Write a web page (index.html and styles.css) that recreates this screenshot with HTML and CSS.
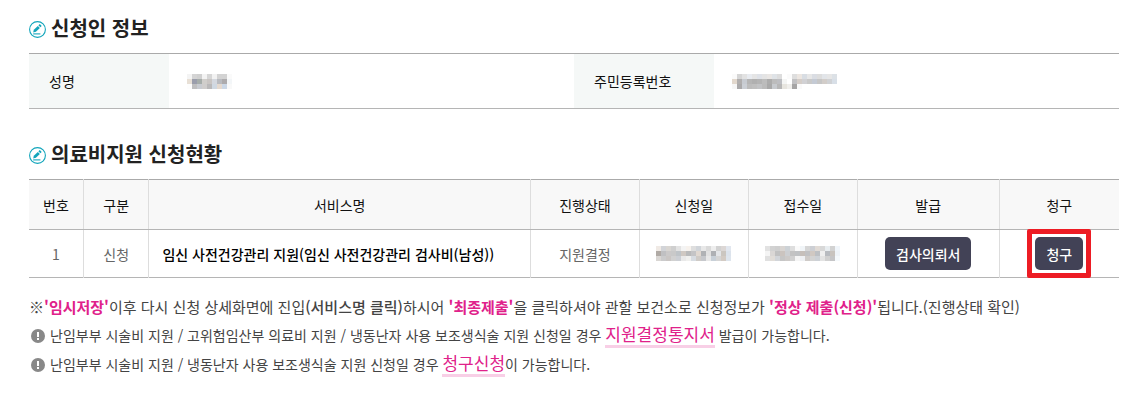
FILE: index.html
```html
<!DOCTYPE html>
<html lang="ko">
<head>
    <meta charset="UTF-8">
    <meta name="viewport" content="width=device-width, initial-scale=1.0">
    <title>의료비지원 신청현황</title>
    <link rel="stylesheet" href="styles.css">
</head>
<body>
    <svg class="defs" width="0" height="0" aria-hidden="true">
        <symbol id="icoEdit" viewBox="0 0 17 17">
            <circle cx="8.5" cy="8.5" r="7.9" fill="none" stroke="#12a5bb" stroke-width="1.1"/>
            <path d="M4.2 11.4 4.8 8.7 8.8 4.9 10.9 7 6.9 10.8z" fill="#12a5bb"/>
            <path d="M9.4 4.3 10.8 3.1 12.7 4.9 11.4 6.3z" fill="#12a5bb"/>
            <path d="M4.2 12.9H11.4" stroke="#12a5bb" stroke-width="1.1"/>
        </symbol>
        <symbol id="icoNotice" viewBox="0 0 14 14">
            <circle cx="7" cy="7" r="7" fill="#888"/>
            <path d="M6 3h2v5H6zM6 9h2v2H6z" fill="#fff"/>
        </symbol>
    </svg>

    <div class="container">
        <h2><svg class="icoEdit"><use href="#icoEdit"/></svg>신청인 정보</h2>
        <table class="infoTable">
            <tr>
                <th scope="row">성명</th>
                <td><svg class="mosaic" width="45" height="15" data-rows="f4f4f4 d4d4d4 d0d0d0 f3f3f3 d6d6d6 f2f2f2 d3d3d3 d3d3d3 fafafa/e8e0d6 9b9eac a6adaa d0cecb c9c5c3 d4d8df b9bbc0 adabad f3f6f8/fdfdfd bfbfc0 c8cbd1 cfcdcc bab9ba cfd8e2 e4d9cf cbd7e6 f9f9f9"></svg></td>
                <th scope="row">주민등록번호</th>
                <td><svg class="mosaic" width="105" height="15" data-rows="fafafa d5d5d5 e2e2e2 e8ebf0 e5e5e5 dfe2e8 e4e4e4 e9e6e4 dfe3e7 dddddd ffffff fbfbfb dedede ece6e1 d8dde3 e7e7e7 dadde3 dddddd e2e5e9 e6e6e6 dce1e6/e2d8cd b0aeae c7cbd1 b5b5b5 b0b0b0 b4b4b4 bcbcbc acacac bcbcbc bdbec2 f4f5f4 ffffff c1c1c3 d4cdc8 d1d1d4 c9c9c9 c4cad4 c6c6c6 d2cdc9 d0d2d5 d8dfe7/f6f6f6 aaa9aa cbcfd5 bcbcbc bfbfbf c2c3c5 bbbbbb a9a9a9 c7cace b7b7b7 e7e5df f0efec a6a5a5 fafafa ffffff ffffff ffffff ffffff ffffff ffffff ffffff"></svg></td>
            </tr>
        </table>

        <h2><svg class="icoEdit"><use href="#icoEdit"/></svg>의료비지원 신청현황</h2>
        <table class="listTable">
            <colgroup>
                <col class="colNo"><col class="colType"><col class="colName">
                <col class="colDate"><col class="colDate"><col class="colDate">
                <col class="colIssue"><col class="colClaim">
            </colgroup>
            <thead>
                <tr>
                    <th>번호</th>
                    <th>구분</th>
                    <th>서비스명</th>
                    <th>진행상태</th>
                    <th>신청일</th>
                    <th>접수일</th>
                    <th>발급</th>
                    <th>청구</th>
                </tr>
            </thead>
            <tbody>
                <tr>
                    <td>1</td>
                    <td>신청</td>
                    <td class="name"><a href="#">임신 사전건강관리 지원(임신 사전건강관리 검사비(남성))</a></td>
                    <td>지원결정</td>
                    <td><svg class="mosaic" width="75" height="15" data-rows="f0eae5 d2d4d8 d9d6d2 cfcfcf e3e3e3 f4f4f4 f7f2ed dedede d1d5da e8e8e8 dadada eeeeee d2d2d2 dcd7d5 e2e7ef/b0aaa5 c0c0c2 cbc9c9 c9c9c9 bfc4c8 cfc8c2 b9babb c4c4c6 e0d8d1 b0b2b5 e1e1e1 aeb0b4 e3e5e8 cbc6c0 dce3ec/d9d6d3 cbcbcc cac6c4 d1d1d1 cccfd4 e9e9e9 f0f0ee d7dce2 cfcbc7 c6c8cc e8e8e8 c8d0d8 d5d5d5 d3cbc4 dee5ed"></svg></td>
                    <td><svg class="mosaic" width="75" height="15" data-rows="e2e2e2 d2d2d2 cfcfcf d9d5d2 cdd2d6 dedede fafafa f1f5f8 d6d6d6 cdcfd4 e1dbd6 d8d8d8 e8edf0 d2d2d2 f0f5fa/f4f4f4 dad7d5 c1c1c1 cbc4bf cdcfd2 c3c3c3 c0c2c4 c6bfba c1c1c3 d0c8c2 bdc0c4 efefef b8bbc0 c8c3be eef3f8/e0e0e0 e1ddd8 d2d5d9 c6c6c6 cdcac8 d1d1d1 f5f5f5 eef0f3 cfcbc8 d3d3d3 cdd1d6 e3e3e3 d0d0d0 c5c5c7 f5f9fc"></svg></td>
                    <td><button type="button" class="btn">검사의뢰서</button></td>
                    <td><button type="button" class="btn marked">청구</button></td>
                </tr>
            </tbody>
        </table>

        <p class="guide">※<strong class="point">'임시저장'</strong>이후 다시 신청 상세화면에 진입<strong>(서비스명 클릭)</strong>하시어 <strong class="point">'최종제출'</strong>을 클릭하셔야 관할 보건소로 신청정보가 <strong class="point">'정상 제출(신청)'</strong>됩니다.(진행상태 확인)</p>
        <ul class="notice">
            <li><svg class="icoNotice"><use href="#icoNotice"/></svg><p>난임부부 시술비 지원 / 고위험임산부 의료비 지원 / 냉동난자 사용 보조생식술 지원 신청일 경우 <em>지원결정통지서</em> 발급이 가능합니다.</p></li>
            <li><svg class="icoNotice"><use href="#icoNotice"/></svg><p>난임부부 시술비 지원 / 냉동난자 사용 보조생식술 지원 신청일 경우 <em>청구신청</em>이 가능합니다.</p></li>
        </ul>
    </div>
    <script src="script.js"></script>
</body>
</html>
```
FILE: styles.css
```css
*{
    margin: 0;
    padding: 0;
    box-sizing: border-box;
    font-family: "Noto Sans CJK KR", sans-serif;
}
body{
    background-color: #fff;
    color: #444;
    font-size: 14px;
}
.defs{
    position: absolute;
}
.container{
    padding: 15px 18px 20px 29px;
}
h2{
    display: flex;
    align-items: center;
    gap: 5px;
    height: 26px;
    margin-bottom: 12px;
    font-size: 20px;
    font-weight: 700;
    line-height: 26px;
    color: #222;
}
.icoEdit{
    width: 17px;
    height: 17px;
    margin-top: 2px;
}
table{
    width: 100%;
    table-layout: fixed;
    border-collapse: collapse;
    border-top: 1px solid #aaa;
    border-bottom: 1px solid #b5b5b5;
}
th{
    font-weight: 400;
    color: #111;
}
.mosaic{
    display: block;
}

/* applicant */
.infoTable{
    margin-bottom: 32px;
}
.infoTable th{
    width: 140px;
    height: 55px;
    padding-left: 20px;
    text-align: left;
    background-color: #f5f8f7;
}
.infoTable td{
    padding-left: 18px;
}

/* list */
.colNo{ width: 5%; }
.colType{ width: 6%; }
.colName{ width: 35%; }
.colDate{ width: 10%; }
.colIssue{ width: 13%; }
.colClaim{ width: 11%; }
.listTable th, .listTable td{
    text-align: center;
    border-left: 1px solid #ddd;
}
.listTable th:first-child, .listTable td:first-child{
    border-left: none;
}
.listTable th{
    height: 50px;
    background-color: #f8f8f8;
    border-bottom: 1px solid #b5b5b5;
}
.listTable td{
    height: 48px;
    color: #666;
}
.listTable .name{
    padding-left: 13px;
    text-align: left;
}
.name a{
    color: #000;
    font-weight: 500;
    text-decoration: none;
}
.listTable .mosaic{
    margin: 0 auto;
}
.btn{
    position: relative;
    height: 33px;
    padding: 0 11px;
    border: none;
    border-radius: 5px;
    background-color: #424256;
    color: #fff;
    font-size: 14px;
    font-weight: 500;
    vertical-align: middle;
}
.marked::after{
    content: "";
    position: absolute;
    inset: -8px;
    border: 5px solid #ed1c24;
    border-radius: 2px;
}

/* guide */
.guide{
    margin-top: 14px;
    font-size: 15px;
    line-height: 29px;
}
.guide strong{
    font-weight: 500;
}
.guide .point{
    color: #e0218a;
    font-weight: 700;
}
.notice{
    list-style: none;
}
.notice li{
    display: flex;
    align-items: center;
    gap: 5px;
    height: 29px;
    padding-left: 2px;
}
.icoNotice{
    width: 14px;
    height: 14px;
}
.notice em{
    display: inline-block;
    border-bottom: 3px solid #f8cfe6;
    color: #e0218a;
    font-size: 17px;
    font-style: normal;
    line-height: 22px;
}
```
FILE: script.js
```js
// masked personal data: rows split by "/", one colour for each 5px cell
document.querySelectorAll(".mosaic").forEach(svg => {
    svg.dataset.rows.split("/").forEach((row, y) => {
        row.split(" ").forEach((color, x) => {
            const rect = document.createElementNS("http://www.w3.org/2000/svg", "rect");
            rect.setAttribute("x", x * 5);
            rect.setAttribute("y", y * 5);
            rect.setAttribute("width", 5);
            rect.setAttribute("height", 5);
            rect.setAttribute("fill", "#" + color);
            svg.appendChild(rect);
        });
    });
});
```
